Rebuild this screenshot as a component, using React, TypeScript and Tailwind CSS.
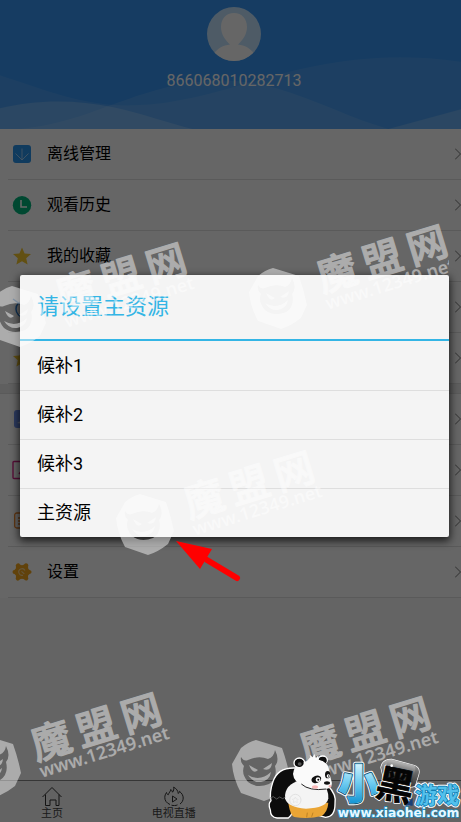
import { ReactNode } from "react";

function DownloadIcon() {
  return (
    <svg className="size-5" viewBox="0 0 20 20" fill="none">
      <rect x="1" y="1" width="18" height="18" rx="3" fill="#2a93ea" />
      <path d="M10 4.5V16M3.5 9.5L10 16l6.500-6.500" stroke="#b9dcf8" strokeWidth="0.8" />
    </svg>
  );
}

function ClockIcon() {
  return (
    <svg className="size-5" viewBox="0 0 20 20" fill="none">
      <circle cx="10" cy="10.300" r="9.200" fill="#00b57c" />
      <path d="M9 5v7h6" stroke="#fff" strokeWidth="1.600" />
    </svg>
  );
}

function StarIcon() {
  return (
    <svg className="size-5" viewBox="0 0 20 20">
      <path d="M10 1.500l2.600 5.900 6.400.6-4.800 4.300 1.400 6.200L10 15.300l-5.600 3.200 1.400-6.200L1 8l6.400-.6z" fill="#f5c72e" />
    </svg>
  );
}

function NetworkIcon() {
  return (
    <svg className="size-5" viewBox="0 0 20 20" fill="none" stroke="#2a7fd8" strokeWidth="1.500">
      <path d="M1 2l7 5" />
      <circle cx="12" cy="12" r="8" />
      <circle cx="12" cy="12" r="3" />
    </svg>
  );
}

function UserIcon() {
  return (
    <svg className="size-5" viewBox="0 0 20 20">
      <rect x="2" y="1" width="18" height="18" rx="3" fill="#6f93f0" />
      <path d="M5 14c2-1 3-1 5-4l2 5z" fill="#dfe7ff" />
    </svg>
  );
}

function PictureIcon() {
  return (
    <svg className="size-5" viewBox="0 0 20 20" fill="none" stroke="#d8248a" strokeWidth="1.400">
      <rect x="1" y="1.500" width="18" height="17" rx="1" />
      <path d="M7 14l3-4" />
    </svg>
  );
}

function NoteIcon() {
  return (
    <svg className="size-5" viewBox="0 0 20 20" fill="none" stroke="#f0872a" strokeWidth="1.300">
      <rect x="2.700" y="2" width="16" height="15" rx="2" />
      <path d="M6 7h9M6 10h9M6 13h9" />
    </svg>
  );
}

function GearIcon() {
  return (
    <svg className="size-5" viewBox="0 0 20 20" fill="none">
      <path
        d="M4.800 1.800Q7 .6 8 2.600q2 1.200 4 0 1.500-2 3.600-.8Q17 3 16 5q0 2.300 1.600 3 2 .3 2 2t-2 2.100q-2 1-1.600 3 1 2-.6 3.200-2 .9-3.400-1-2-1.200-4 0-1.500 2-3.400 1Q3 17 4 15.100q.4-2-1.500-3-2-.3-2-2.100T2.400 8Q4.200 7 4 5 3 3 4.800 1.800z"
        fill="#f2a51c"
      />
      <path d="M13 8.500A3.300 3.300 0 1 0 11 13.200M9.500 9.300l2.800 2.600" stroke="#fff" strokeOpacity="0.55" strokeWidth="1.100" />
    </svg>
  );
}

type Row = { icon: ReactNode; label?: string };

const PRIMARY_ROWS: Row[] = [
  { icon: <DownloadIcon />, label: "离线管理" },
  { icon: <ClockIcon />, label: "观看历史" },
  { icon: <StarIcon />, label: "我的收藏" },
  { icon: <NetworkIcon /> },
  { icon: <StarIcon /> },
];

const SECONDARY_ROWS: Row[] = [
  { icon: <UserIcon /> },
  { icon: <PictureIcon /> },
  { icon: <NoteIcon /> },
  { icon: <GearIcon />, label: "设置" },
];

const SOURCES = ["候补1", "候补2", "候补3", "主资源"];

function MenuList({ rows }: { rows: Row[] }) {
  return (
    <ul className="bg-white pl-2">
      {rows.map((row, i) => (
        <li key={i} className="border-b border-[#e2e2e2]">
          <button type="button" className="flex h-[50px] w-full items-center gap-[15px] pl-1 text-left text-base text-black">
            {row.icon}
            <span className="flex-1">{row.label}</span>
            <svg className="h-3 w-[6px]" viewBox="0 0 6 12" fill="none" stroke="#777" strokeWidth="1">
              <path d="M0 0.500L5.500 6 0 11.500" />
            </svg>
          </button>
        </li>
      ))}
    </ul>
  );
}

function ProfileHeader() {
  return (
    <header className="relative h-[129px] bg-[#3796f5]">
      <svg className="absolute inset-0 size-full" viewBox="0 0 1383 387" preserveAspectRatio="none" fill="#fff">
        <path d="M0 226C150 275 260 320 400 316C560 312 700 258 850 220C1010 178 1180 156 1383 185V387H0z" fillOpacity="0.09" />
        <path d="M60 387C240 368 330 305 500 262C620 232 730 236 830 265C950 300 1060 358 1165 387z" fillOpacity="0.11" />
        <path d="M0 325C100 300 220 296 340 322C430 342 500 368 577 387H0zM1165 387L1383 328V387z" fillOpacity="0.19" />
      </svg>
      <div className="relative flex flex-col items-center gap-2 pt-[7px] pl-[7px]">
        <svg className="size-[54px]" viewBox="0 0 54 54">
          <defs>
            <clipPath id="avatar">
              <circle cx="27" cy="27" r="27" />
            </clipPath>
          </defs>
          <g clipPath="url(#avatar)">
            <rect width="54" height="54" fill="#c3e4ff" />
            <path d="M27 6c8 0 13 6 13 14 0 7-4 13-9 17.500 7 1 12 3.500 16 9V55H7v-8.500c4-5.500 9-8 16-9C18 33 14 27 14 20 14 12 19 6 27 6z" fill="#fff" />
          </g>
        </svg>
        <span className="font-['Roboto'] text-base leading-6 text-white">866068010282713</span>
      </div>
    </header>
  );
}

function TabBar() {
  return (
    <nav className="flex h-[42px] justify-between border-t border-[#888] bg-[#f8f8f8] pr-[22px] pl-[30px] text-[11px] leading-4 text-[#444]">
      <button type="button" className="flex w-11 flex-col items-center pt-[5px]">
        <svg className="size-5" viewBox="0 0 20 20" fill="none" stroke="#333" strokeWidth="1">
          <path d="M.5 11L10 1.500l9.500 9.500M3.500 8.500v11h4.500v-5.500h6v5.500h3v-11" />
        </svg>
        主页
      </button>
      <button type="button" className="flex w-11 flex-col items-center pt-[5px]">
        <svg className="size-5" viewBox="0 0 20 20" fill="none" stroke="#333" strokeWidth="1">
          <path d="M6 18.500C2.500 17 .8 14.500.8 11.500c0-2 .7-3.500 1.700-5 .3 1.300.8 2 1.700 2.300C5 6.500 6.500 5.500 6.800 3.500c1 .7 1.500 1.700 1.700 2.700C9.700 5 10 3 9.600 1.200 12.500 2.500 14 5 14.300 7.500c.8-.5 1-1.200 1.200-2.200 2.400 2 3.700 4.200 3.700 6.700 0 2.500-1.200 4.700-3.200 6M7.500 19.200c2 .6 4.200.5 6-.3" />
          <path d="M8.500 10v6l4.500-3z" />
        </svg>
        电视直播
      </button>
      <span className="w-11" />
      <span className="w-11" />
    </nav>
  );
}

function SourceDialog() {
  return (
    <div className="absolute inset-0 flex items-center bg-black/60 pr-3 pb-[10px] pl-5">
      <div
        role="dialog"
        aria-labelledby="source-title"
        className="w-full rounded-[2px] bg-[#f4f4f4] shadow-[0_3px_9px_1px_rgba(0,0,0,0.75)]"
      >
        <h2 id="source-title" className="border-b-2 border-[#33b5e5] px-[17px] text-[22px] leading-[64px] text-[#33b5e5]">
          请设置主资源
        </h2>
        <ul className="divide-y divide-[#dedede] pt-px">
          {SOURCES.map((source) => (
            <li key={source}>
              <button type="button" className="h-12 w-full px-[17px] text-left text-lg text-black">
                {source}
              </button>
            </li>
          ))}
        </ul>
      </div>
    </div>
  );
}

function Watermark({ x, y }: { x: number; y: number }) {
  return (
    <g transform={`translate(${x} ${y})`} fill="#fff" opacity="0.46">
      <path
        fillRule="evenodd"
        d="M-4-30L22-22Q27-8 30 7L24 20Q14 28 4 31L-19 23Q-27 8-28-6L-19-22Q-12-28-4-30zM-19-13Q-16-8-12-10Q-1-15 8-11Q14-13 15-20Q20-10 15-4Q18 8 9 14Q-3 19-12 12Q-19 4-16-4Q-20-8-19-13zM-11-5L-2 0Q-7 5-11-5zM3-1L12-7Q11 2 3-1zM-12 5Q0 12 11 2Q10 10 1 12Q-7 13-12 5z"
      />
      <g transform="rotate(-17)">
        <text
          x="45 92 139"
          y="8"
          fontSize="40"
          stroke="#fff"
          strokeWidth="1.200"
          strokeLinejoin="round"
          strokeLinecap="round"
          className="font-['Noto_Sans_CJK_SC',sans-serif] font-medium"
        >
          魔盟网
        </text>
        <text x="45" y="26" fontSize="18" className="font-['Noto_Sans',sans-serif] font-semibold">
          www.12349.net
        </text>
      </g>
    </g>
  );
}

function Watermarks() {
  return (
    <svg className="pointer-events-none absolute inset-y-0 right-3 left-0 h-full w-[calc(100%-12px)]">
      <Watermark x={16} y={316} />
      <Watermark x={277} y={298} />
      <Watermark x={144} y={524} />
      <Watermark x={-9} y={766} />
      <Watermark x={260} y={770} />
    </svg>
  );
}

function Pointer() {
  return (
    <svg className="pointer-events-none absolute top-[540px] left-[175px] h-[42px] w-[66px]" viewBox="0 0 66 42">
      <path d="M32 20L62 38" stroke="#f00" strokeWidth="6" strokeLinecap="round" />
      <path d="M1 1l36 8-12 20z" fill="#f00" />
    </svg>
  );
}

function PandaLogo() {
  return (
    <svg className="pointer-events-none absolute right-0 bottom-0 h-[70px] w-[196px]" viewBox="102 246 588 210">
      <defs>
        <linearGradient id="ice" x1="0" y1="0" x2="0" y2="1">
          <stop offset="0.150" stopColor="#e4f8ff" />
          <stop offset="0.500" stopColor="#74cff2" />
          <stop offset="0.900" stopColor="#0a8fd0" />
        </linearGradient>
        <linearGradient id="ink" x1="0" y1="0" x2="0" y2="1">
          <stop offset="0" stopColor="#b5b5b5" />
          <stop offset="0.500" stopColor="#666" />
          <stop offset="1" stopColor="#3a3a3a" />
        </linearGradient>
      </defs>

      {/* panda */}
      <g stroke="#fff" strokeWidth="4" strokeLinejoin="round" fill="#0c0c0c">
        <path d="M192 294Q140 292 126 335Q114 370 120 392Q110 400 118 420Q118 442 138 444H172Q190 430 185 400L212 320z" />
        <path d="M290 346Q318 375 312 402Q312 440 284 442L262 436Q280 400 280 360z" />
        <ellipse cx="205" cy="279" rx="16" ry="15" />
        <ellipse cx="275" cy="270" rx="14" ry="12" />
      </g>
      <path d="M172 400Q178 438 190 441Q232 448 272 438Q290 425 292 398z" fill="#eaa535" />
      <path d="M210 330Q160 342 162 385Q168 412 225 416Q287 415 292 385Q294 360 274 340z" fill="#f4f4f4" />
      <path d="M117 384l10-4 10 7 9-6 9 5 9-5" fill="none" stroke="#777" strokeWidth="2" />
      <path d="M228 273L238 262L236 254L245 262L250 252L255 264L262 256L262 269Q286 272 293 294Q296 318 302 335Q306 352 286 357Q250 365 222 350Q188 338 186 312Q188 282 228 273z" fill="#fafafa" />
      <path d="M211 342Q235 364 286 357" fill="none" stroke="#222" strokeWidth="3" />
      <ellipse cx="205" cy="279" rx="13" ry="12" fill="#0c0c0c" />
      <ellipse cx="206" cy="282" rx="6" ry="5" fill="#555" />
      <path d="M266 270Q276 258 286 270Q288 278 284 280Q276 270 266 270z" fill="#0c0c0c" />
      <ellipse cx="256" cy="328" rx="15" ry="11" fill="#111" transform="rotate(-20 256 328)" />
      <ellipse cx="290" cy="314" rx="8" ry="11" fill="#111" />
      <circle cx="261" cy="329" r="7" fill="#fff" />
      <circle cx="292" cy="318" r="5" fill="#fff" />
      <circle cx="262" cy="329" r="3" />
      <circle cx="293" cy="318" r="2" />
      <ellipse cx="288" cy="339" rx="9" ry="5" fill="#111" />
      <ellipse cx="252" cy="351" rx="9" ry="5" fill="#f8b6b6" />
      <ellipse cx="297" cy="349" rx="4" ry="4" fill="#f8b6b6" />
      <circle cx="193" cy="390" r="17" fill="none" stroke="#e2e2e2" strokeWidth="3" />
      <path d="M193 381l3 6 6 1-4 4 1 6-6-3-6 3 1-6-4-4 6-1z" fill="none" stroke="#e2e2e2" strokeWidth="2" />
      <path d="M229 428l-2 14M246 428l-4 12" stroke="#a8701a" strokeWidth="2" />

      {/* lettering */}
      <g className="font-['Noto_Sans_CJK_SC',sans-serif]" strokeLinejoin="round" paintOrder="stroke">
        <path d="M450 292Q454 268 482 268L547 286Q568 292 563 312L552 348Q540 352 520 350L460 335z" fill="url(#ink)" stroke="#fff" strokeWidth="4" />
        <g className="font-black">
          <text x="322" y="388" fontSize="122" fill="#fff" stroke="#fff" strokeWidth="14">小</text>
          <text x="322" y="388" fontSize="122" fill="#16587c" stroke="#16587c" strokeWidth="8">小</text>
          <text x="322" y="388" fontSize="122" fill="url(#ice)" stroke="#a8e2f8" strokeWidth="2">小</text>
        </g>
        <g className="font-bold" transform="rotate(12 495 345)">
          <text x="437" y="388" fontSize="114" fill="#fff" stroke="#fff" strokeWidth="7">黑</text>
          <path d="M455 284Q458 276 470 276H530Q542 276 542 290V328H455z" fill="url(#ink)" />
          <text x="437" y="388" fontSize="114" fill="#050505" stroke="#000" strokeWidth="2">黑</text>
        </g>
        <circle cx="482" cy="287" r="4" fill="#fff" />
        <path d="M545 383v24h-22z" fill="#173f78" />
        <g className="font-bold">
          <text x="553" y="399" fontSize="66" fill="#fff" stroke="#fff" strokeWidth="11">游戏</text>
          <text x="553" y="399" fontSize="66" fill="#1480b4" stroke="#1480b4" strokeWidth="5">游戏</text>
          <text x="553" y="399" fontSize="66" fill="#52c0ec">游戏</text>
        </g>
      </g>
      <text
        x="320"
        y="441"
        fontSize="37"
        fill="#e8f8ff"
        stroke="#1c94c8"
        strokeWidth="4"
        strokeLinejoin="round"
        paintOrder="stroke"
        className="font-['DejaVu_Sans',sans-serif] font-bold"
      >
        www.xiaohei.com
      </text>
    </svg>
  );
}

export default function App() {
  return (
    <div className="relative flex min-h-screen flex-col overflow-hidden bg-white font-['Roboto','Noto_Sans_CJK_SC',sans-serif]">
      <ProfileHeader />
      <main className="flex flex-1 flex-col bg-[#fafafa]">
        <MenuList rows={PRIMARY_ROWS} />
        <div className="h-[10px] border-b border-[#e2e2e2] bg-[#eee]" />
        <MenuList rows={SECONDARY_ROWS} />
      </main>
      <TabBar />
      <SourceDialog />
      <Watermarks />
      <Pointer />
      <PandaLogo />
    </div>
  );
}
